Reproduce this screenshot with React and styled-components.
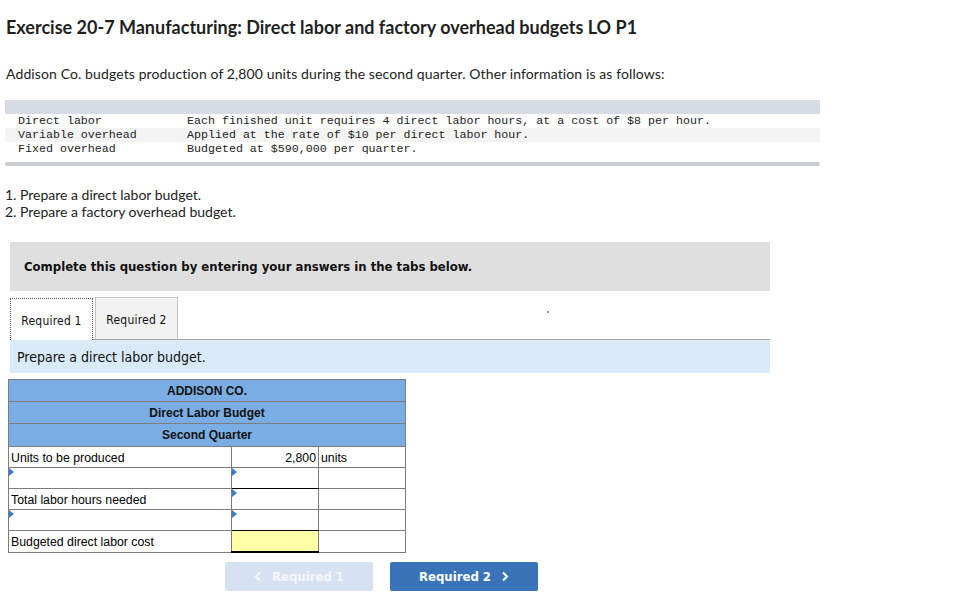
import React from "react";
import styled, { createGlobalStyle } from "styled-components";

const Global = createGlobalStyle`
  html, body { margin: 0; padding: 0; background: #fff; }
  body { font-family: Lato, "Open Sans", sans-serif; color: #222; }
`;

const Page = styled.div`
  width: 966px;
  height: 615px;
  padding: 0 0 0 5px;
  box-sizing: border-box;
  position: relative;
  overflow: hidden;
`;

const Title = styled.h1`
  margin: 0;
  padding: 16px 0 0 1px;
  font-family: Lato, sans-serif;
  font-weight: 700;
  font-size: 18px;
  line-height: 22px;
  color: #1f1f1f;
`;

const Intro = styled.p`
  margin: 0;
  padding: 27px 0 0 1px;
  font-family: Lato, sans-serif;
  font-size: 14px;
  letter-spacing: 0.11px;
  line-height: 18px;
  color: #222;
`;

const DataBox = styled.div`
  margin-top: 17px;
  width: 815px;
`;

const DataTopBar = styled.div`
  height: 14px;
  background: #d7dbe4;
`;

const DataRow = styled.div`
  display: grid;
  grid-template-columns: 169px 1fr;
  padding-left: 13px;
  height: 14px;
  background: ${(p) => (p.$shade ? "#f4f4f4" : "#fff")};
  font-family: "Liberation Mono", monospace;
  font-size: 11.65px;
  line-height: 13px;
  color: #222;
  white-space: pre;
`;

const DataBottomBar = styled.div`
  margin-top: 6px;
  height: 4px;
  border-radius: 2px;
  background: #c9ccd3;
`;

const Steps = styled.div`
  margin-top: 20px;
  padding-left: 0;
  font-family: Lato, sans-serif;
  font-size: 14px;
  line-height: 17px;
  color: #222;
`;

const QuestionBox = styled.div`
  margin: 22px 0 0 5px;
  width: 760px;
  height: 49px;
  background: #dfdfdf;
  display: flex;
  align-items: center;
  padding-left: 14px;
  box-sizing: border-box;
  font-family: "DejaVu Sans Condensed", "DejaVu Sans", sans-serif;
  font-weight: 700;
  font-size: 13px;
  color: #111;
`;

const TabStrip = styled.div`
  margin: 6px 0 0 5px;
  width: 760px;
  display: flex;
  align-items: flex-end;
  gap: 2px;
  border-bottom: 1px solid #a8a8a8;
  position: relative;
`;

const Tab = styled.div`
  width: 83px;
  height: 42px;
  box-sizing: border-box;
  display: flex;
  align-items: center;
  justify-content: center;
  font-family: "DejaVu Sans Condensed", "DejaVu Sans", sans-serif;
  font-size: 12px;
  letter-spacing: 0.2px;
  color: #111;
  background: ${(p) => (p.$active ? "#fff" : "#f2f2f2")};
  border: ${(p) => (p.$active ? "1px dotted #555" : "1px solid #c6c6c6")};
  border-bottom: none;
  margin-bottom: ${(p) => (p.$active ? "-1px" : "0")};
  padding-top: 2px;
`;

const Dot = styled.span`
  position: absolute;
  left: 537px;
  top: 14px;
  width: 2px;
  height: 2px;
  background: #3a6fb0;
  border-radius: 50%;
`;

const Prompt = styled.div`
  margin-left: 5px;
  width: 760px;
  height: 33px;
  background: #d9ebf9;
  display: flex;
  align-items: center;
  padding-left: 7px;
  box-sizing: border-box;
  font-family: "DejaVu Sans Condensed", "DejaVu Sans", sans-serif;
  font-size: 14px;
  color: #111;
`;

const Table = styled.table`
  margin: 6px 0 0 3px;
  border-collapse: collapse;
  font-family: "Liberation Sans", Arial, sans-serif;
  font-size: 12.3px;
  color: #000;
  table-layout: fixed;
  width: 398px;
`;

const HeadCell = styled.th`
  background: #7aade4;
  border: 1px solid #7d7d7d;
  height: ${(p) => (p.$tall ? "22px" : "21px")};
  padding: 0;
  font-weight: 700;
  text-align: center;
  font-size: 12px;
  color: #111;
`;

const Cell = styled.td`
  position: relative;
  border: 1px solid #7d7d7d;
  border-bottom: ${(p) => p.$under || "1px solid #7d7d7d"};
  height: 19px;
  padding: 1px 2px 0;
  text-align: ${(p) => (p.$right ? "right" : "left")};
  background: ${(p) => (p.$yellow ? "#ffffa8" : "#fff")};
  white-space: nowrap;
  overflow: hidden;
`;

const Marker = styled.span`
  position: absolute;
  left: 0;
  top: 0;
  width: 0;
  height: 0;
  border-top: 4px solid transparent;
  border-bottom: 4px solid transparent;
  border-left: 5px solid #3b7ccf;
`;

const NavRow = styled.div`
  display: flex;
  gap: 17px;
  margin: 9px 0 0 220px;
`;

const NavButton = styled.div`
  width: 148px;
  height: 29px;
  border-radius: 2px;
  display: flex;
  align-items: center;
  justify-content: center;
  gap: 10px;
  font-family: "DejaVu Sans Condensed", "DejaVu Sans", sans-serif;
  font-weight: 700;
  font-size: 13px;
  color: #fff;
  background: ${(p) => (p.$disabled ? "#d6e2f1" : "#3a74b8")};
  ${(p) => p.$disabled && "color: #f4f7fb;"}
`;

const Chevron = ({ dir }) => (
  <svg width="8" height="11" viewBox="0 0 8 11">
    <path
      d={dir === "left" ? "M6 1.5 L2 5.5 L6 9.5" : "M2 1.5 L6 5.5 L2 9.5"}
      fill="none"
      stroke="currentColor"
      strokeWidth="2"
    />
  </svg>
);

export default function App() {
  return (
    <Page>
      <Global />
      <Title>Exercise 20-7 Manufacturing: Direct labor and factory overhead budgets LO P1</Title>
      <Intro>Addison Co. budgets production of 2,800 units during the second quarter. Other information is as follows:</Intro>
      <DataBox>
        <DataTopBar />
        <DataRow>
          <span>Direct labor</span>
          <span>Each finished unit requires 4 direct labor hours, at a cost of $8 per hour.</span>
        </DataRow>
        <DataRow $shade>
          <span>Variable overhead</span>
          <span>Applied at the rate of $10 per direct labor hour.</span>
        </DataRow>
        <DataRow>
          <span>Fixed overhead</span>
          <span>Budgeted at $590,000 per quarter.</span>
        </DataRow>
        <DataBottomBar />
      </DataBox>
      <Steps>
        <div>1. Prepare a direct labor budget.</div>
        <div>2. Prepare a factory overhead budget.</div>
      </Steps>
      <QuestionBox>Complete this question by entering your answers in the tabs below.</QuestionBox>
      <TabStrip>
        <Tab $active>Required 1</Tab>
        <Tab>Required 2</Tab>
        <Dot />
      </TabStrip>
      <Prompt>Prepare a direct labor budget.</Prompt>
      <Table>
        <colgroup>
          <col style={{ width: 223 }} />
          <col style={{ width: 87 }} />
          <col style={{ width: 87 }} />
        </colgroup>
        <thead>
          <tr><HeadCell colSpan={3}>ADDISON CO.</HeadCell></tr>
          <tr><HeadCell colSpan={3}>Direct Labor Budget</HeadCell></tr>
          <tr><HeadCell colSpan={3} $tall>Second Quarter</HeadCell></tr>
        </thead>
        <tbody>
          <tr>
            <Cell>Units to be produced</Cell>
            <Cell $right>2,800</Cell>
            <Cell>units</Cell>
          </tr>
          <tr>
            <Cell><Marker /></Cell>
            <Cell $under="1px solid #000"><Marker /></Cell>
            <Cell />
          </tr>
          <tr>
            <Cell>Total labor hours needed</Cell>
            <Cell><Marker /></Cell>
            <Cell />
          </tr>
          <tr>
            <Cell><Marker /></Cell>
            <Cell $under="1px solid #000"><Marker /></Cell>
            <Cell />
          </tr>
          <tr>
            <Cell>Budgeted direct labor cost</Cell>
            <Cell $yellow $under="2px solid #000" />
            <Cell />
          </tr>
        </tbody>
      </Table>
      <NavRow>
        <NavButton $disabled><Chevron dir="left" />Required 1</NavButton>
        <NavButton>Required 2<Chevron dir="right" /></NavButton>
      </NavRow>
    </Page>
  );
}
